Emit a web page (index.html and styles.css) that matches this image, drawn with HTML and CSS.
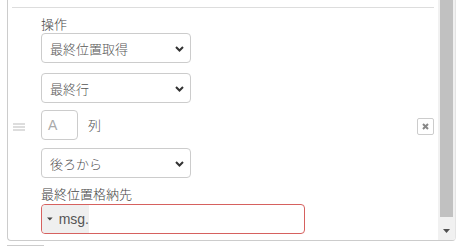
FILE: index.html
```html
<!DOCTYPE html>
<html lang="ja">
<head>
<meta charset="utf-8">
<link rel="stylesheet" href="styles.css">
</head>
<body>
<div class="list">
  <div class="items">
    <div class="item-prev"></div>
    <div class="item">
      <div class="handle">
        <svg width="12" height="8" viewBox="0 0 12 8"><rect x="0" y="0" width="12" height="2" fill="#ddd"/><rect x="0" y="3" width="12" height="2" fill="#ddd"/><rect x="0" y="6" width="12" height="2" fill="#ddd"/></svg>
      </div>
      <div class="fields">
        <div class="label">操作</div>
        <div class="select s1"><span>最終位置取得</span><svg class="chev" width="9" height="6" viewBox="0 0 9 6"><path d="M1 1 L4.5 4.5 L8 1" fill="none" stroke="#333" stroke-width="2"/></svg></div>
        <div class="select s2"><span>最終行</span><svg class="chev" width="9" height="6" viewBox="0 0 9 6"><path d="M1 1 L4.5 4.5 L8 1" fill="none" stroke="#333" stroke-width="2"/></svg></div>
        <div class="colrow">
          <div class="input-a">A</div>
          <span class="col-label">列</span>
        </div>
        <div class="select s3"><span>後ろから</span><svg class="chev" width="9" height="6" viewBox="0 0 9 6"><path d="M1 1 L4.5 4.5 L8 1" fill="none" stroke="#333" stroke-width="2"/></svg></div>
        <div class="label l2">最終位置格納先</div>
        <div class="typed">
          <div class="typed-btn"><svg width="7" height="4" viewBox="0 0 7 4"><path d="M0 0 L7 0 L3.5 4 Z" fill="#444"/></svg><span>msg.</span></div>
        </div>
      </div>
      <div class="remove">
        <div class="remove-btn"><svg width="7" height="7" viewBox="0 0 7 7"><path d="M1 1 L6 6 M6 1 L1 6" stroke="#888" stroke-width="2"/></svg></div>
      </div>
    </div>
  </div>
  <div class="scrollbar">
    <div class="thumb"></div>
    <div class="arrow"><svg width="7" height="4" viewBox="0 0 7 4"><path d="M0 0 L7 0 L3.5 4 Z" fill="#505050"/></svg></div>
  </div>
</div>
<div class="addbtn"></div>
</body>
</html>
```
FILE: styles.css
```css
html, body {
  margin: 0;
  padding: 0;
  background: #fff;
  overflow: hidden;
}
body {
  font-family: "Liberation Sans", "Noto Sans CJK JP", sans-serif;
  font-size: 13px;
  font-weight: 300;
  color: #555;
}
.list {
  margin-left: 7px;
  width: 449px;
  height: 241px;
  box-sizing: border-box;
  border-left: 1px solid #ccc;
  border-right: 1px solid #e4e4e4;
  border-bottom: 1px solid #ccc;
  border-radius: 0 0 4px 4px;
  display: flex;
  overflow: hidden;
}
.items {
  width: 430px;
  overflow: hidden;
}
.item-prev {
  height: 7px;
  margin: 0 4px 0 4px;
  border-bottom: 1px solid #ddd;
}
.item {
  margin: 0 4px;
  padding-top: 8px;
  display: flex;
}
.handle {
  width: 29px;
  display: flex;
  align-items: center;
  padding-left: 1px;
  box-sizing: border-box;
  padding-top: 3px;
}
.handle svg { display: block; }
.fields {
  flex: 1;
  display: flex;
  flex-direction: column;
  align-items: flex-start;
}
.label {
  line-height: 17px;
  height: 17px;
  color: #444;
}
.l2 {
  margin-top: 8px;
  height: 18px;
  line-height: 18px;
}
.select {
  width: 150px;
  height: 30px;
  box-sizing: border-box;
  border: 1px solid #ccc;
  border-radius: 4px;
  display: flex;
  align-items: center;
  justify-content: space-between;
  padding: 0 6px 0 8px;
  color: #555;
}
.chev { display: block; margin-top: 1px; }
.s1 { margin-bottom: 10px; }
.s2 { margin-bottom: 7px; }
.colrow {
  display: flex;
  align-items: center;
  gap: 10px;
  margin-bottom: 8px;
}
.input-a {
  width: 37px;
  height: 30px;
  box-sizing: border-box;
  border: 1px solid #ccc;
  border-radius: 4px;
  padding-left: 6px;
  line-height: 28px;
  font-size: 14px;
  font-weight: 400;
  color: #aaa;
}
.col-label { margin-top: -2px; }
.typed {
  width: 264px;
  height: 30px;
  box-sizing: border-box;
  border: 1px solid #d6615f;
  border-radius: 4px;
  display: flex;
  overflow: hidden;
}
.typed-btn {
  width: 47px;
  background: #efefef;
  display: flex;
  align-items: center;
  padding-left: 5px;
  box-sizing: border-box;
  gap: 6px;
  font-size: 14px;
  font-weight: 400;
  color: #555;
  border-radius: 3px 0 0 3px;
}
.typed-btn svg { display: block; }
.remove {
  display: flex;
  align-items: center;
  padding-top: 2px;
}
.remove-btn {
  width: 17px;
  height: 17px;
  box-sizing: border-box;
  border: 1px solid #ccc;
  border-radius: 2px;
  display: flex;
  align-items: center;
  justify-content: center;
}
.remove-btn svg { display: block; }
.scrollbar {
  width: 17px;
  background: #f1f1f1;
  display: flex;
  flex-direction: column;
}
.thumb {
  height: 217px;
  margin: 0 2px;
  background: #c1c1c1;
}
.arrow {
  flex: 1;
  display: flex;
  justify-content: center;
  padding-top: 12px;
  box-sizing: border-box;
}
.arrow svg { display: block; }
.addbtn {
  margin-left: 7px;
  margin-top: 4px;
  width: 37px;
  height: 1px;
  box-sizing: border-box;
  border-top: 1px solid #ccc;
}
```
